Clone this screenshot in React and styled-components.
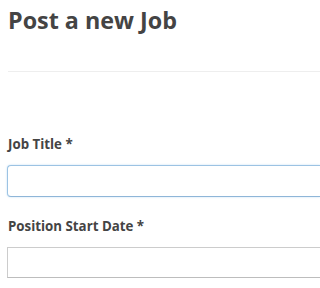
import React from "react";
import styled, { createGlobalStyle } from "styled-components";

const Global = createGlobalStyle`
  html, body { margin: 0; padding: 0; background: #fff; }
  body { font-family: "Open Sans", "Liberation Sans", sans-serif; }
`;

const Page = styled.div`
  box-sizing: border-box;
  padding-left: 8px;
`;

const Heading = styled.h1`
  margin: 0;
  padding-top: 4px;
  font-size: 23.3px;
  line-height: 32px;
  font-weight: 700;
  color: #444;
`;

const Divider = styled.hr`
  margin: 35px 0 0 0;
  border: 0;
  border-top: 1px solid #eeeeee;
  height: 0;
`;

const Form = styled.form`
  display: flex;
  flex-direction: column;
  padding-top: 63px;
`;

const Field = styled.div`
  display: flex;
  flex-direction: column;
  margin-bottom: 20px;
`;

const Label = styled.label`
  font-size: 13.3px;
  line-height: 18px;
  font-weight: 700;
  color: #444;
  margin-bottom: 12px;
`;

const Input = styled.input`
  box-sizing: border-box;
  margin-left: -1px;
  height: ${(p) => (p.$focused ? "32px" : "31px")};
  width: calc(100% + 1px);
  border: 1px solid ${(p) => (p.$focused ? "#9cc3e3" : "#cccccc")};
  border-right: none;
  border-bottom-color: ${(p) => (p.$focused ? "#8fb6d8" : "#bdbdbd")};
  border-radius: ${(p) => (p.$focused ? "4px 0 0 4px" : "0")};
  box-shadow: ${(p) => (p.$focused ? "0 0 2px rgba(102,175,233,0.45)" : "none")};
  outline: none;
  background: #fff;
  font-family: inherit;
  font-size: 13px;
  padding: 0 8px;
`;

export default function App() {
  return (
    <>
      <Global />
      <Page>
        <Heading>Post a new Job</Heading>
        <Divider />
        <Form>
          <Field>
            <Label>Job Title *</Label>
            <Input $focused type="text" />
          </Field>
          <Field>
            <Label>Position Start Date *</Label>
            <Input type="text" />
          </Field>
        </Form>
      </Page>
    </>
  );
}
